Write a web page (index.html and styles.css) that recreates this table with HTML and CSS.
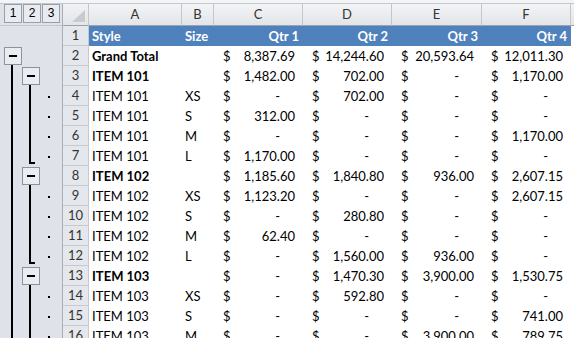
FILE: index.html
```html
<!DOCTYPE html>
<html>
<head>
<meta charset="utf-8">
<link rel="stylesheet" href="styles.css">
</head>
<body>
<div class="topline"></div>
<div class="sheet">
  <div class="levels"><span class="lvl">1</span><span class="lvl">2</span><span class="lvl">3</span></div>
  <div class="corner"><span class="tri"></span></div>
  <div class="colh">A</div>
  <div class="colh">B</div>
  <div class="colh">C</div>
  <div class="colh">D</div>
  <div class="colh">E</div>
  <div class="colh">F</div>
  <div class="colh last"></div>

  <div class="gutter">
    <svg width="63" height="320" viewBox="0 0 63 320">
      <g fill="#000">
        <rect x="11" y="39" width="2" height="281"/>
        <rect x="29" y="59" width="2" height="79"/>
        <rect x="29" y="136" width="6" height="2"/>
        <rect x="29" y="159" width="2" height="79"/>
        <rect x="29" y="236" width="6" height="2"/>
        <rect x="29" y="259" width="2" height="61"/>
        <rect x="48" y="70" width="2" height="2"/>
        <rect x="48" y="90" width="2" height="2"/>
        <rect x="48" y="110" width="2" height="2"/>
        <rect x="48" y="130" width="2" height="2"/>
        <rect x="48" y="170" width="2" height="2"/>
        <rect x="48" y="190" width="2" height="2"/>
        <rect x="48" y="210" width="2" height="2"/>
        <rect x="48" y="230" width="2" height="2"/>
        <rect x="48" y="270" width="2" height="2"/>
        <rect x="48" y="290" width="2" height="2"/>
        <rect x="48" y="310" width="2" height="2"/>
      </g>
      <g fill="#e9ecf1" stroke="#8d939c" stroke-width="1">
        <rect x="4.5" y="21.5" width="17" height="17"/>
        <rect x="22.5" y="41.5" width="17" height="17"/>
        <rect x="22.5" y="141.5" width="17" height="17"/>
        <rect x="22.5" y="241.5" width="17" height="17"/>
      </g>
      <g fill="#000">
        <rect x="9" y="29" width="8" height="2"/>
        <rect x="27" y="49" width="8" height="2"/>
        <rect x="27" y="149" width="8" height="2"/>
        <rect x="27" y="249" width="8" height="2"/>
      </g>
    </svg>
  </div>

  <div class="rh">1</div>
  <div class="hd">Style</div><div class="hd">Size</div><div class="hd r">Qtr 1</div><div class="hd r">Qtr 2</div><div class="hd r">Qtr 3</div><div class="hd r">Qtr 4</div><div class="blank"></div>

  <div class="rh">2</div>
  <div class="c b">Grand Total</div><div class="c"></div>
  <div class="acc"><span>$</span><span>8,387.69</span></div>
  <div class="acc"><span>$</span><span>14,244.60</span></div>
  <div class="acc"><span>$</span><span>20,593.64</span></div>
  <div class="acc"><span>$</span><span>12,011.30</span></div><div class="blank"></div>

  <div class="rh">3</div>
  <div class="c b">ITEM 101</div><div class="c"></div>
  <div class="acc"><span>$</span><span>1,482.00</span></div>
  <div class="acc"><span>$</span><span>702.00</span></div>
  <div class="acc"><span>$</span><span class="z">-</span></div>
  <div class="acc"><span>$</span><span>1,170.00</span></div><div class="blank"></div>

  <div class="rh">4</div>
  <div class="c">ITEM 101</div><div class="c">XS</div>
  <div class="acc"><span>$</span><span class="z">-</span></div>
  <div class="acc"><span>$</span><span>702.00</span></div>
  <div class="acc"><span>$</span><span class="z">-</span></div>
  <div class="acc"><span>$</span><span class="z">-</span></div><div class="blank"></div>

  <div class="rh">5</div>
  <div class="c">ITEM 101</div><div class="c">S</div>
  <div class="acc"><span>$</span><span>312.00</span></div>
  <div class="acc"><span>$</span><span class="z">-</span></div>
  <div class="acc"><span>$</span><span class="z">-</span></div>
  <div class="acc"><span>$</span><span class="z">-</span></div><div class="blank"></div>

  <div class="rh">6</div>
  <div class="c">ITEM 101</div><div class="c">M</div>
  <div class="acc"><span>$</span><span class="z">-</span></div>
  <div class="acc"><span>$</span><span class="z">-</span></div>
  <div class="acc"><span>$</span><span class="z">-</span></div>
  <div class="acc"><span>$</span><span>1,170.00</span></div><div class="blank"></div>

  <div class="rh">7</div>
  <div class="c">ITEM 101</div><div class="c">L</div>
  <div class="acc"><span>$</span><span>1,170.00</span></div>
  <div class="acc"><span>$</span><span class="z">-</span></div>
  <div class="acc"><span>$</span><span class="z">-</span></div>
  <div class="acc"><span>$</span><span class="z">-</span></div><div class="blank"></div>

  <div class="rh">8</div>
  <div class="c b">ITEM 102</div><div class="c"></div>
  <div class="acc"><span>$</span><span>1,185.60</span></div>
  <div class="acc"><span>$</span><span>1,840.80</span></div>
  <div class="acc"><span>$</span><span>936.00</span></div>
  <div class="acc"><span>$</span><span>2,607.15</span></div><div class="blank"></div>

  <div class="rh">9</div>
  <div class="c">ITEM 102</div><div class="c">XS</div>
  <div class="acc"><span>$</span><span>1,123.20</span></div>
  <div class="acc"><span>$</span><span class="z">-</span></div>
  <div class="acc"><span>$</span><span class="z">-</span></div>
  <div class="acc"><span>$</span><span>2,607.15</span></div><div class="blank"></div>

  <div class="rh">10</div>
  <div class="c">ITEM 102</div><div class="c">S</div>
  <div class="acc"><span>$</span><span class="z">-</span></div>
  <div class="acc"><span>$</span><span>280.80</span></div>
  <div class="acc"><span>$</span><span class="z">-</span></div>
  <div class="acc"><span>$</span><span class="z">-</span></div><div class="blank"></div>

  <div class="rh">11</div>
  <div class="c">ITEM 102</div><div class="c">M</div>
  <div class="acc"><span>$</span><span>62.40</span></div>
  <div class="acc"><span>$</span><span class="z">-</span></div>
  <div class="acc"><span>$</span><span class="z">-</span></div>
  <div class="acc"><span>$</span><span class="z">-</span></div><div class="blank"></div>

  <div class="rh">12</div>
  <div class="c">ITEM 102</div><div class="c">L</div>
  <div class="acc"><span>$</span><span class="z">-</span></div>
  <div class="acc"><span>$</span><span>1,560.00</span></div>
  <div class="acc"><span>$</span><span>936.00</span></div>
  <div class="acc"><span>$</span><span class="z">-</span></div><div class="blank"></div>

  <div class="rh">13</div>
  <div class="c b">ITEM 103</div><div class="c"></div>
  <div class="acc"><span>$</span><span class="z">-</span></div>
  <div class="acc"><span>$</span><span>1,470.30</span></div>
  <div class="acc"><span>$</span><span>3,900.00</span></div>
  <div class="acc"><span>$</span><span>1,530.75</span></div><div class="blank"></div>

  <div class="rh">14</div>
  <div class="c">ITEM 103</div><div class="c">XS</div>
  <div class="acc"><span>$</span><span class="z">-</span></div>
  <div class="acc"><span>$</span><span>592.80</span></div>
  <div class="acc"><span>$</span><span class="z">-</span></div>
  <div class="acc"><span>$</span><span class="z">-</span></div><div class="blank"></div>

  <div class="rh">15</div>
  <div class="c">ITEM 103</div><div class="c">S</div>
  <div class="acc"><span>$</span><span class="z">-</span></div>
  <div class="acc"><span>$</span><span class="z">-</span></div>
  <div class="acc"><span>$</span><span class="z">-</span></div>
  <div class="acc"><span>$</span><span>741.00</span></div><div class="blank"></div>

  <div class="rh">16</div>
  <div class="c">ITEM 103</div><div class="c">M</div>
  <div class="acc"><span>$</span><span class="z">-</span></div>
  <div class="acc"><span>$</span><span class="z">-</span></div>
  <div class="acc"><span>$</span><span>3,900.00</span></div>
  <div class="acc"><span>$</span><span>789.75</span></div><div class="blank"></div>
</div>
</body>
</html>
```

FILE: styles.css
```css
html, body {
  margin: 0;
  padding: 0;
  background: #ffffff;
  overflow: hidden;
}
body {
  width: 574px;
  height: 338px;
  font-family: Lato, "Liberation Sans", sans-serif;
  font-size: 13px;
  color: #000;
}
.topline {
  height: 3px;
  background: #f4f5f7;
  border-bottom: 1px solid #c3c7cd;
}
.sheet {
  display: grid;
  grid-template-columns: 63px 26px 93px 32px 89px 89px 90px 89px 1fr;
  grid-template-rows: 22px;
  grid-auto-rows: 20px;
}
.levels {
  display: flex;
  gap: 1px;
  padding: 0 0 0 4px;
  align-items: flex-start;
  background: #dfe3e9;
  border-bottom: 1px solid #c3c7cd;
  border-right: 1px solid #a9aeb6;
}
.lvl {
  box-sizing: border-box;
  width: 18px;
  height: 19px;
  border: 1px solid #9aa0a8;
  background: #e8ebef;
  font-family: "Liberation Sans", sans-serif;
  font-size: 12px;
  line-height: 17px;
  text-align: center;
}
.corner {
  background: linear-gradient(#f1f2f4, #e3e5e9);
  border-right: 1px solid #c3c7cd;
  border-bottom: 1px solid #9ea3ab;
  display: flex;
  justify-content: flex-end;
  align-items: flex-end;
  padding: 0 3px 3px 0;
}
.tri {
  width: 0;
  height: 0;
  border-left: 13px solid transparent;
  border-bottom: 12px solid #c7cbd1;
}
.colh {
  background: linear-gradient(#f3f4f6, #e2e5e9);
  border-right: 1px solid #c3c7cd;
  border-bottom: 1px solid #9ea3ab;
  text-align: center;
  line-height: 21px;
  color: #333;
}
.colh.last {
  border-right: none;
}
.gutter {
  grid-column: 1;
  grid-row: 2 / span 16;
  background: #dfe3e9;
  border-right: 1px solid #a9aeb6;
  overflow: hidden;
}
.gutter svg {
  display: block;
}
.rh {
  background: #e4e7eb;
  border-bottom: 1px solid #c6cad0;
  border-right: 1px solid #c6cad0;
  text-align: center;
  line-height: 19px;
  color: #333;
}
.hd {
  background: #4f81bd;
  color: #fff;
  font-weight: bold;
  padding: 0 3px;
  line-height: 20px;
  white-space: nowrap;
  overflow: hidden;
}
.hd.r {
  text-align: right;
  padding-right: 4px;
}
.c {
  padding: 0 3px;
  line-height: 20px;
  white-space: nowrap;
  overflow: hidden;
}
.c.b {
  font-weight: bold;
}
.acc {
  display: flex;
  justify-content: space-between;
  padding: 0 8px 0 9px;
  line-height: 20px;
  white-space: nowrap;
}
.acc .z {
  margin-right: 15px;
}
.blank {
  background: #fff;
}
```
